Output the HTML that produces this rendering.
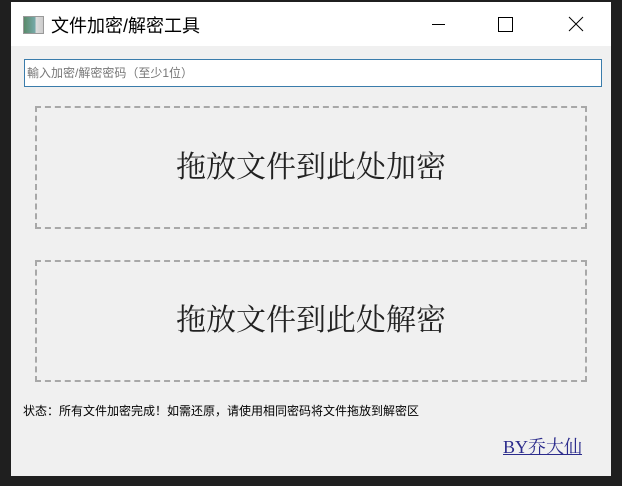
<!DOCTYPE html>
<html><head><meta charset="utf-8"><style>
body{margin:0;width:622px;height:486px;background:#1f1f1f;position:relative;overflow:hidden;font-family:"Liberation Sans","Noto Sans CJK SC",sans-serif}
.win{position:absolute;left:11px;top:2px;width:600px;height:474px;background:#f0f0f0}
.tb{position:absolute;left:0;top:0;width:600px;height:44px;background:#fff}
.title{position:absolute;left:40px;top:10px;font-size:18px;color:#000}
.ico{position:absolute;left:12px;top:14px;width:19px;height:16px;background:linear-gradient(90deg,#5a8a6a,#7aa 60%,#ddd 62%,#ccc);border:1px solid #999}
.inp{position:absolute;left:13px;top:57px;width:574px;height:26px;border:1px solid #3a7cab;background:#fff;font-size:12px;color:#777;line-height:26px;padding-left:2px}
.box{position:absolute;left:24px;width:548px;border:2px dashed #a8a8a8;font-family:"Liberation Serif","Noto Serif CJK SC",serif;font-size:30px;color:#222;text-align:center}
.st{position:absolute;left:12px;top:400px;font-size:12px;color:#000}
.by{position:absolute;left:492px;top:431px;font-family:"Liberation Serif","Noto Serif CJK SC",serif;font-size:18px;color:#2b2b8c;text-decoration:underline}
</style></head><body>
<div class="win">
<div class="tb"><div class="ico"></div><div class="title">文件加密/解密工具</div>
<svg style="position:absolute;left:0;top:0" width="600" height="44"><path d="M421 22.5h13" stroke="#000" stroke-width="1"/><rect x="487.5" y="15.5" width="14" height="14" fill="none" stroke="#000"/><path d="M558 15l14 14M572 15l-14 14" stroke="#000"/></svg>
</div>
<div class="inp">輸入加密/解密密码（至少1位）</div>
<div class="box" style="top:104px;height:119px;line-height:119px">拖放文件到此处加密</div>
<div class="box" style="top:258px;height:118px;line-height:118px">拖放文件到此处解密</div>
<div class="st">状态：所有文件加密完成！如需还原，请使用相同密码将文件拖放到解密区</div>
<div class="by">BY乔大仙</div>
</div>
</body></html>
